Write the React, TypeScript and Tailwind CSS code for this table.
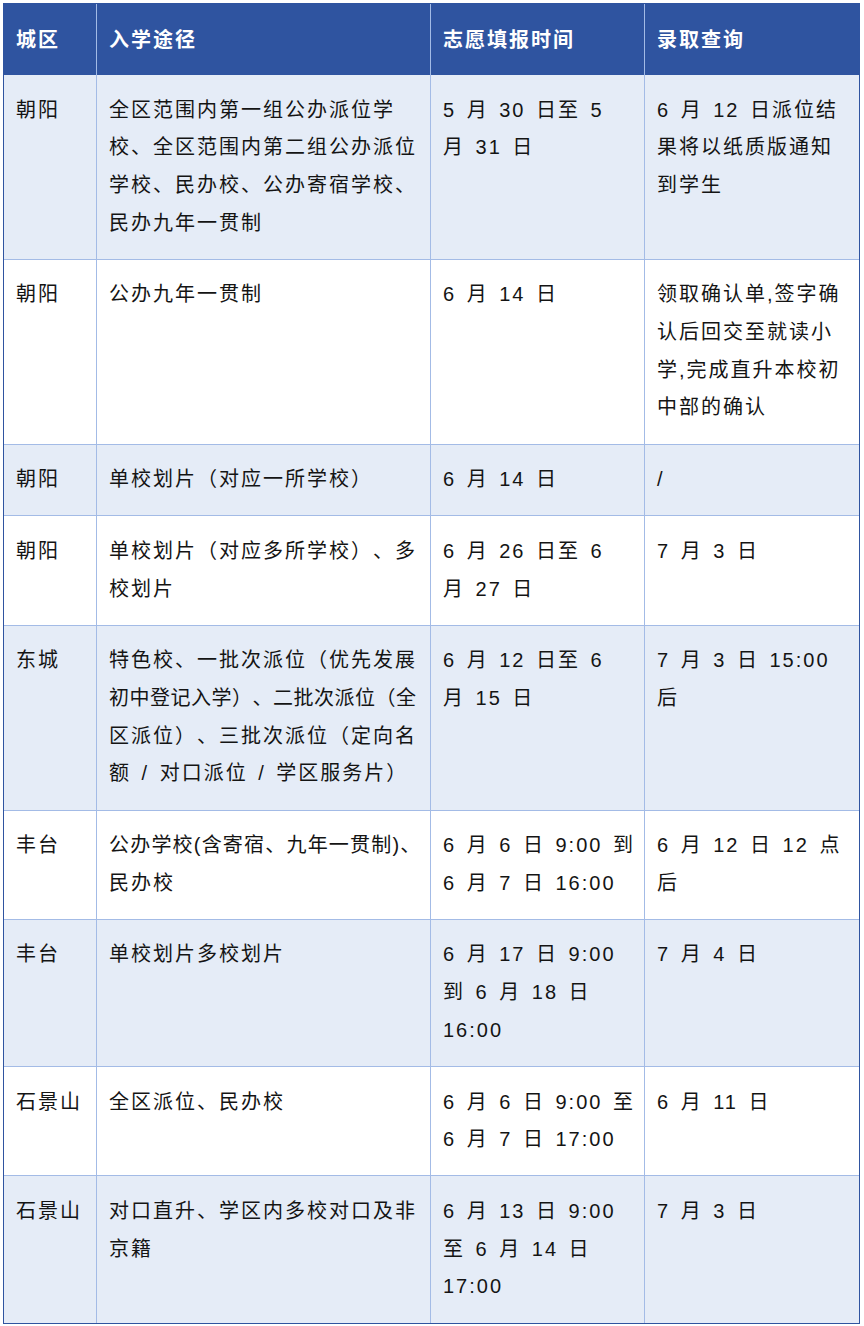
import React from "react";

type Line = string | { t: string; c: string };

type Row = {
  city: string;
  path: Line[];
  time: Line[];
  result: Line[];
};

const rows: Row[] = [
  {
    city: "朝阳",
    path: [
      "全区范围内第一组公办派位学",
      "校、全区范围内第二组公办派位",
      "学校、民办校、公办寄宿学校、",
      "民办九年一贯制",
    ],
    time: ["5 月 30 日至 5", "月 31 日"],
    result: ["6 月 12 日派位结", "果将以纸质版通知", "到学生"],
  },
  {
    city: "朝阳",
    path: ["公办九年一贯制"],
    time: ["6 月 14 日"],
    result: ["领取确认单,签字确", "认后回交至就读小", "学,完成直升本校初", "中部的确认"],
  },
  {
    city: "朝阳",
    path: ["单校划片（对应一所学校）"],
    time: ["6 月 14 日"],
    result: ["/"],
  },
  {
    city: "朝阳",
    path: ["单校划片（对应多所学校）、多", "校划片"],
    time: ["6 月 26 日至 6", "月 27 日"],
    result: ["7 月 3 日"],
  },
  {
    city: "东城",
    path: [
      "特色校、一批次派位（优先发展",
      { t: "初中登记入学）、二批次派位（全", c: "tracking-[0.5px]" },
      "区派位）、三批次派位（定向名",
      "额 / 对口派位 / 学区服务片）",
    ],
    time: ["6 月 12 日至 6", "月 15 日"],
    result: ["7 月 3 日 15:00", "后"],
  },
  {
    city: "丰台",
    path: [{ t: "公办学校(含寄宿、九年一贯制)、", c: "tracking-[1.2px]" }, "民办校"],
    time: ["6 月 6 日 9:00 到", "6 月 7 日 16:00"],
    result: ["6 月 12 日 12 点", "后"],
  },
  {
    city: "丰台",
    path: ["单校划片多校划片"],
    time: ["6 月 17 日 9:00", "到 6 月 18 日", "16:00"],
    result: ["7 月 4 日"],
  },
  {
    city: "石景山",
    path: ["全区派位、民办校"],
    time: ["6 月 6 日 9:00 至", "6 月 7 日 17:00"],
    result: ["6 月 11 日"],
  },
  {
    city: "石景山",
    path: ["对口直升、学区内多校对口及非", "京籍"],
    time: ["6 月 13 日 9:00", "至 6 月 14 日", "17:00"],
    result: ["7 月 3 日"],
  },
];

function Lines({ lines }: { lines: Line[] }) {
  return (
    <>
      {lines.map((l, i) =>
        typeof l === "string" ? (
          <div key={i} className="whitespace-nowrap">
            {l}
          </div>
        ) : (
          <div key={i} className={"whitespace-nowrap " + l.c}>
            {l.t}
          </div>
        )
      )}
    </>
  );
}

export default function App() {
  const headers = ["城区", "入学途径", "志愿填报时间", "录取查询"];
  return (
    <div
      className="min-h-[1326px] w-[864px] bg-white pl-[3px] pt-[3px] [text-spacing-trim:space-all]"
      style={{ fontFamily: '"Liberation Sans", "Noto Sans CJK SC", sans-serif' }}
    >
      <div className="w-[857px] border border-[#2f54a0]">
        <div className="grid grid-cols-[93px_334px_214px_214px]">
          {headers.map((h, i) => (
            <div
              key={h}
              className={
                "flex h-[71px] items-center bg-[#2f54a0] px-3 text-[20px] font-bold tracking-[2px] text-white " +
                (i < 3 ? "border-r border-[#a3bbe6]" : "")
              }
            >
              {h}
            </div>
          ))}
          {rows.map((r, ri) => {
            const bg = ri % 2 === 0 ? "bg-[#e5ecf7]" : "bg-white";
            const bb = ri < rows.length - 1 ? "border-b" : "";
            const cell =
              "px-3 py-[16.5px] text-[20px] leading-[37.7px] tracking-[2px] [word-spacing:3px] text-[#141414] border-[#a3bbe6] " +
              bg +
              " " +
              bb;
            return (
              <React.Fragment key={ri}>
                <div className={cell + " border-r"}>
                  <div className="whitespace-nowrap">{r.city}</div>
                </div>
                <div className={cell + " border-r"}>
                  <Lines lines={r.path} />
                </div>
                <div className={cell + " border-r"}>
                  <Lines lines={r.time} />
                </div>
                <div className={cell}>
                  <Lines lines={r.result} />
                </div>
              </React.Fragment>
            );
          })}
        </div>
      </div>
    </div>
  );
}
